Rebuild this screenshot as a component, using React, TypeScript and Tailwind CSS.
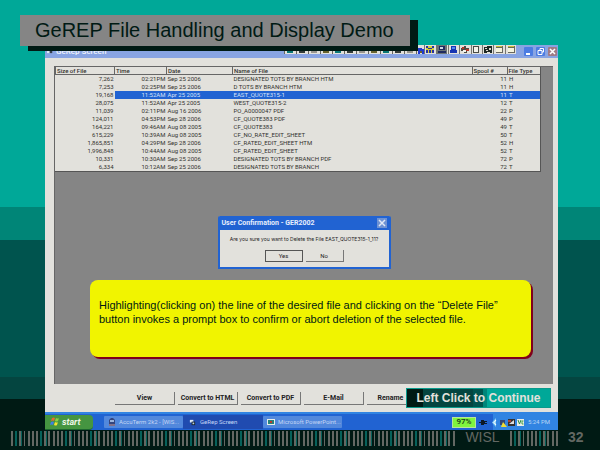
import type { ReactNode } from "react";

type FileRow = {
  size: string;
  time: string;
  date: string;
  name: string;
  spool: string;
  type: string;
  selected?: boolean;
};

const files: FileRow[] = [
  { size: "7,262", time: "02:21PM", date: "Sep 25 2006", name: "DESIGNATED TOTS BY BRANCH HTM", spool: "11", type: "H" },
  { size: "7,253", time: "02:25PM", date: "Sep 25 2006", name: "D TOTS BY BRANCH HTM", spool: "11", type: "H" },
  { size: "19,168", time: "11:52AM", date: "Apr 25 2005", name: "EAST_QUOTE315-1", spool: "11", type: "T", selected: true },
  { size: "28,075", time: "11:52AM", date: "Apr 25 2005", name: "WEST_QUOTE315-2", spool: "12", type: "T" },
  { size: "11,039", time: "02:11PM", date: "Aug 16 2006", name: "PO_A0000047 PDF", spool: "22", type: "P" },
  { size: "124,011", time: "04:53PM", date: "Sep 28 2006", name: "CF_QUOTE383 PDF", spool: "49", type: "P" },
  { size: "164,221", time: "09:46AM", date: "Aug 08 2005", name: "CF_QUOTE383", spool: "49", type: "T" },
  { size: "615,229", time: "10:39AM", date: "Aug 08 2005", name: "CF_NO_RATE_EDIT_SHEET", spool: "50", type: "T" },
  { size: "1,865,851", time: "04:29PM", date: "Sep 28 2006", name: "CF_RATED_EDIT_SHEET HTM", spool: "52", type: "H" },
  { size: "1,996,848", time: "10:44AM", date: "Aug 08 2005", name: "CF_RATED_EDIT_SHEET", spool: "52", type: "T" },
  { size: "10,331", time: "10:30AM", date: "Sep 25 2006", name: "DESIGNATED TOTS BY BRANCH PDF", spool: "72", type: "P" },
  { size: "6,334", time: "10:12AM", date: "Sep 25 2006", name: "DESIGNATED TOTS BY BRANCH", spool: "72", type: "T" },
];

const actions = ["View", "Convert to HTML", "Convert to PDF", "E-Mail", "Rename"];

function Toolbar() {
  const covered = Array.from({ length: 12 }, (_, i) => i);
  return (
    <svg className="h-[10px] w-[232px] shrink-0" viewBox="0 0 232 10" shapeRendering="crispEdges">
      <rect width="232" height="9" fill="#e2e1dc" />
      {covered.map((i) => (
        <g key={i} transform={`translate(${i * 12} 0)`}>
          <rect x="0" width="1" height="9" fill="#65645f" />
          <rect x="3" y="5" width="6" height="3" fill={["#0a7775", "#343c39", "#97948d", "#67632e"][i % 4]} />
        </g>
      ))}
      <g transform="translate(140 0)">
        <path d="M-6 3h4v1h2v5h-2v-3h-2v3h-2z" fill="#1f3ad0" />
        <path d="M0 0h1v9h-1zM12 0h1v9h-1zM24 0h1v9h-1zM35 0h1v9h-1zM47 0h1v9h-1zM58 0h1v9h-1zM69 0h1v9h-1zM81 0h1v9h-1z" fill="#77766f" />
        <path d="M2 1h8v7h-8z" fill="#d4ce36" />
        <path d="M2 1h2v2h-2zM8 1h2v2h-2zM4 3h4v1h-4zM2 5h2v3h-2zM8 5h2v3h-2zM5 5h2v3h-2z" fill="#2833a5" />
        <path d="M13 0h10v9h-10z" fill="#6c7475" />
        <path d="M15 1h6v4h-6zM14 6h8v2h-8z" fill="#202b60" />
        <path d="M16 2h3v2h-3z" fill="#cdd8e3" />
        <path d="M27 1h5v4h-5zM26 5h7v3h-7z" fill="#1735b2" />
        <path d="M28 2h3v2h-3z" fill="#4e8aee" />
        <path d="M37 3h3v-2h2v2h3v3h-2v2h-3v-2h-3z" fill="#494b45" />
        <path d="M38 2h2v2h-2zM42 4h3v2h-3z" fill="#b63728" />
        <path d="M39 5h3v2h-3z" fill="#f4f4ee" />
        <path d="M49 1h6v7h-6z" fill="#4a4c46" />
        <path d="M50 2h4v5h-4z" fill="#f3f2ea" />
        <path d="M60 2h3v-1h5v7h-2v-1h-3v1h-3z" fill="#1f2924" />
        <path d="M61 3h2v1h-2zM65 3h2v2h-2zM62 5h2v1h-2z" fill="#dedbd2" />
        <path d="M72 1h7v7h-7zM84 1h7v7h-7z" fill="#68675f" />
        <path d="M72 3h6v4h-6zM84 3h6v4h-6z" fill="#f5f3dd" />
        <path d="M72 1h6v1h-6zM84 1h6v1h-6z" fill="#c9bd34" />
      </g>
    </svg>
  );
}

function WindowControls() {
  return (
    <div className="flex gap-[3px]">
      <button aria-label="Minimize" className="size-[9px] rounded-[1px] bg-[#4c7ce2]">
        <svg viewBox="0 0 9 9"><path d="M2 6h4v2H2z" fill="#fff" /></svg>
      </button>
      <button aria-label="Restore" className="size-[9px] rounded-[1px] bg-[#4c7ce2]">
        <svg viewBox="0 0 9 9"><path d="M4 3V1.500h3.500V5H6M2 3.500h4v4H2z" fill="none" stroke="#fff" /></svg>
      </button>
      <button aria-label="Close" className="size-[9px] rounded-[1px] bg-[#a07b86]">
        <svg viewBox="0 0 9 9"><path d="M2 2l5 5M7 2l-5 5" stroke="#fff" strokeWidth="1.500" /></svg>
      </button>
    </div>
  );
}

function FileTable() {
  return (
    <table className="w-full table-fixed border-collapse bg-[#e2e1dc] font-['Roboto',sans-serif] text-[6px] leading-[8px] text-[#33332f]">
      <colgroup>
        <col className="w-[59px]" />
        <col className="w-[52px]" />
        <col className="w-[66px]" />
        <col />
        <col className="w-[35px]" />
        <col className="w-[33px]" />
      </colgroup>
      <thead>
        <tr className="border-b border-[#666] leading-[7px]">
          {["Size of File", "Time", "Date", "Name of File", "Spool #", "File Type"].map((h) => (
            <th key={h} className="overflow-hidden border-l border-[#666] p-0 pl-px text-left font-medium whitespace-nowrap">
              {h}
            </th>
          ))}
        </tr>
      </thead>
      <tbody>
        {files.map((f, i) => {
          const cell = f.selected ? "bg-[#2163d2] p-0 text-[#d6e2f8]" : "p-0";
          return (
            <tr key={i} className="h-[8px] whitespace-nowrap">
              <td className="p-0 pr-px text-right">{f.size}</td>
              <td className={`${cell} text-right`}><span className="pr-px">{f.time}</span></td>
              <td className={cell}><span className="pl-px">{f.date}</span></td>
              <td className={cell}><span className="pl-px">{f.name}</span></td>
              <td className={`${cell} text-right`}>{f.spool}</td>
              <td className={cell}><span className="pl-[2px]">{f.type}</span></td>
            </tr>
          );
        })}
      </tbody>
    </table>
  );
}

function ConfirmDialog() {
  return (
    <div role="dialog" aria-labelledby="confirm-title" className="w-[173px] rounded-t-[2px] border-2 border-t-0 border-[#2163d2] bg-[#e2e1dc] font-['Roboto',sans-serif] text-[7px] leading-[8px] text-[#22221f]">
      <div className="flex h-[14px] items-center justify-between bg-[#2163d2] px-[2px]">
        <h2 id="confirm-title" className="font-bold text-[#e6eefc]">User Confirmation - GER2002</h2>
        <button aria-label="Close" className="size-[10px] bg-[#6d92d4]">
          <svg viewBox="0 0 10 10"><path d="M2 2l6 6M8 2l-6 6" stroke="#dfe8f6" strokeWidth="1.500" /></svg>
        </button>
      </div>
      <p className="pt-[5px] text-center font-['Inter',sans-serif] text-[5px] whitespace-nowrap">Are you sure you want to Delete the File EAST_QUOTE315-1_11?</p>
      <div className="flex justify-center gap-[3px] pt-[7px] pb-[5px]">
        <button className="h-[12px] w-[38px] border border-[#555] text-[6px]">Yes</button>
        <button className="h-[12px] w-[38px] border-r border-b border-[#777] text-[6px]">No</button>
      </div>
    </div>
  );
}

function Task({ icon, label, active }: { icon: ReactNode; label: string; active?: boolean }) {
  return (
    <button
      className={
        active
          ? "flex h-[14px] w-[80px] items-center gap-[4px] bg-[#204bb0] px-[6px] text-[#c4d6f5]"
          : "flex h-[12px] w-[79px] items-center gap-[3px] rounded-[1px] bg-[#5288dc] px-[4px] text-[#c4d6f5]"
      }
    >
      {icon}
      <span className="whitespace-nowrap">{label}</span>
    </button>
  );
}

function Taskbar() {
  return (
    <div className="flex h-[18px] items-center border-t-2 border-[#3184e2] bg-[#2163d2] font-['Roboto',sans-serif] text-[6px] leading-[8px]">
      <button className="mr-[11px] flex h-[15px] w-[48px] items-center gap-[2px] rounded-r-[4px] border-b border-[#1c662f] bg-[#459541] pl-[5px] text-[9px] font-bold text-[#eef5e8] italic">
        <svg className="h-[9px] w-[10px]" viewBox="0 0 10 9">
          <path d="M2 1q2-1 3 0l-1 3q-1-1-3 0z" fill="#e66a32" />
          <path d="M6 1q2 1 3 0l-1 3q-2 1-3 0z" fill="#8ed044" />
          <path d="M1 5q2-1 3 0l-1 3q-1-1-3 0z" fill="#3f7ee8" />
          <path d="M5 5q2 1 3 0l-1 3q-1 1-3 0z" fill="#f3e52e" />
        </svg>
        start
      </button>
      <Task
        label="AccuTerm 2k2 - [WIS..."
        icon={
          <svg className="size-[8px] shrink-0" viewBox="0 0 8 8">
            <path d="M1 7V2l2-2h2l2 2v5z" fill="#33457f" />
            <path d="M2 2h4v2H2z" fill="#9bb4dc" />
            <path d="M1 6h6v2H1z" fill="#81708a" />
          </svg>
        }
      />
      <Task
        active
        label="GeRep Screen"
        icon={
          <svg className="size-[7px] shrink-0" viewBox="0 0 8 8">
            <path d="M1 1h4v3H1z" fill="#dce9f7" />
            <path d="M3 3h4v4H3z" fill="#17202c" />
            <path d="M4 4h2v2H4z" fill="#b9d3df" />
          </svg>
        }
      />
      <Task
        label="Microsoft PowerPoint..."
        icon={
          <svg className="size-[8px] shrink-0" viewBox="0 0 8 8">
            <path d="M0 1h8v6H0z" fill="#e7ece8" />
            <path d="M1 2h6v4H1z" fill="#26817b" />
            <path d="M3 3h2v2H3z" fill="#b7382d" />
          </svg>
        }
      />
      <div className="ml-auto flex h-full items-center">
        <span className="flex h-[11px] w-[24px] items-center justify-center border border-[#b7e49b] bg-[#80f43e] text-[8px] font-medium text-[#14351c]">97%</span>
        <svg className="ml-[3px] h-[8px] w-[8px]" viewBox="0 0 8 8">
          <path d="M0 4h2V2h3v1h3v1H6v1h2v1H5v1H2V5H0z" fill="#0c1726" />
        </svg>
        <div className="ml-[6px] flex h-full items-center gap-px bg-[#3184e2] pr-[8px] pl-[4px]">
          <svg className="h-[9px] w-[27px] shrink-0 overflow-visible" viewBox="0 0 27 9">
            <path d="M-5 4.500l4-4.500v9z" fill="#8fd2f5" />
            <path d="M-1 2l-2 2.500l2 2.500" stroke="#fff" fill="none" />
            <path d="M3 2h5v5H3z" fill="#314779" />
            <path d="M6 4l4 5H4z" fill="#f0dc34" />
            <path d="M11 1h7v7h-7z" fill="#333" />
            <path d="M12 6l5-4v4z" fill="#ddd" />
            <path d="M11 2h3v2h-3z" fill="#a43" />
            <path d="M20 1h7v7h-7z" fill="#e9eee7" />
            <path d="M21 2l1.500 4L24 2" stroke="#2b8b45" fill="none" />
            <path d="M26.500 3H25v3h1.500" stroke="#49a34a" fill="none" />
          </svg>
          <time className="ml-[3px] whitespace-nowrap text-[#b8d6f6]">5:24 PM</time>
        </div>
      </div>
    </div>
  );
}

function Bars({ id }: { id: string }) {
  return (
    <svg className="h-[15px] w-full" aria-hidden="true">
      <defs>
        <pattern id={id} width="50" height="15" patternUnits="userSpaceOnUse">
          <path d="M0 0h2v15h-2zM8 0h2v15h-2zM13 0h1v15h-1zM17 0h2v15h-2zM21 0h2v15h-2zM25 0h2v15h-2zM33 0h2v15h-2zM37 0h2v15h-2zM42 0h2v15h-2zM46 0h2v15h-2z" fill="#636863" />
          <path d="M4 0h2v15h-2zM10 0h1v15h-1zM29 0h2v15h-2zM35 0h1v15h-1z" fill="#07615a" />
        </pattern>
      </defs>
      <rect width="100%" height="15" fill={`url(#${id})`} />
    </svg>
  );
}

export default function App() {
  return (
    <main className="flex min-h-screen flex-col bg-[linear-gradient(to_bottom,#00a898_46%,#008577_46%_53.3%,#00544e_53.3%_83.7%,#044540_83.7%_88.6%,#001a14_88.6%)] font-['Liberation_Sans',Arial,sans-serif]">
      <h1 className="relative z-10 mt-[15px] ml-[20px] h-[31px] w-[390px] bg-[#858585] pl-[15px] text-[20px] leading-[31px] whitespace-nowrap text-[#001a14] shadow-[8px_5px_0_#001a14]">
        GeREP File Handling and Display Demo
      </h1>

      <section className="-mt-px mr-[42px] ml-[45px] flex flex-1 flex-col bg-[#e2e1dc]">
        <div className="flex h-[13px] items-start bg-[#88a4e2]">
          <svg className="mt-[2px] ml-[2px] size-[7px]" viewBox="0 0 8 8">
            <path d="M0 3h4v4H0z" fill="#dce9f7" />
            <path d="M3 4h3v3H3z" fill="#343e4c" />
          </svg>
          <span className="ml-[2px] font-['Roboto',sans-serif] text-[8px] leading-[14px] font-medium text-[#f1f4fc]">GeRep Screen</span>
          <div className="ml-auto flex items-start gap-[8px] pr-px">
            <Toolbar />
            <div className="pt-[2px]"><WindowControls /></div>
          </div>
        </div>

        <div className="mt-[8px] mr-[5px] ml-[9px] flex flex-1 flex-col items-center border-t border-l border-[#666] bg-[#858585]">
          <div className="w-full pr-[12px]">
            <div className="border-r border-b border-[#555]">
              <FileTable />
            </div>
          </div>
          <div className="mt-[44px]">
            <ConfirmDialog />
          </div>
          <p className="mt-[11px] mr-[22px] ml-[35px] h-[77px] self-stretch rounded-[8px] bg-[#f1f400] px-[9px] pt-[18px] text-[11px] leading-[14px] text-[#001a14] shadow-[2px_2px_0_#80001a]">
            Highlighting(clicking on) the line of the desired file and clicking on the “Delete File” button invokes a prompt box to confirm or abort deletion of the selected file.
          </p>
        </div>

        <div className="flex h-[28px] items-center pl-[70px]">
          <div className="flex gap-[3px] font-['Roboto',sans-serif] text-[7px] leading-[8px] font-bold text-[#22221f]">
            {actions.map((a) => (
              <button key={a} className="h-[13px] w-[60px] shrink-0 border-r border-b border-[#777] whitespace-nowrap last:w-[48px]">
                {a}
              </button>
            ))}
          </div>
          <button className="relative mr-[7px] -ml-[9px] h-[20px] flex-1 border border-[#0a9a8c] bg-[linear-gradient(to_right,#001a14_11%,#044540_11%_46%,#00544e_46%_53%,#00857a_53%_56%,#00a898_56%)] text-[12px] leading-[18px] font-bold whitespace-nowrap text-[#e2e1dc]">
            Left Click to Continue
          </button>
        </div>

        <Taskbar />
      </section>

      <footer className="flex h-[20px] items-start pt-px text-[14px] leading-[13px] text-[#636863]">
        <div className="ml-[11px] flex-1"><Bars id="bars-left" /></div>
        <span className="w-[55px] text-center">WISL</span>
        <div className="w-[50px]"><Bars id="bars-right" /></div>
        <span className="w-[40px] pl-[8px] font-bold">32</span>
      </footer>
    </main>
  );
}
